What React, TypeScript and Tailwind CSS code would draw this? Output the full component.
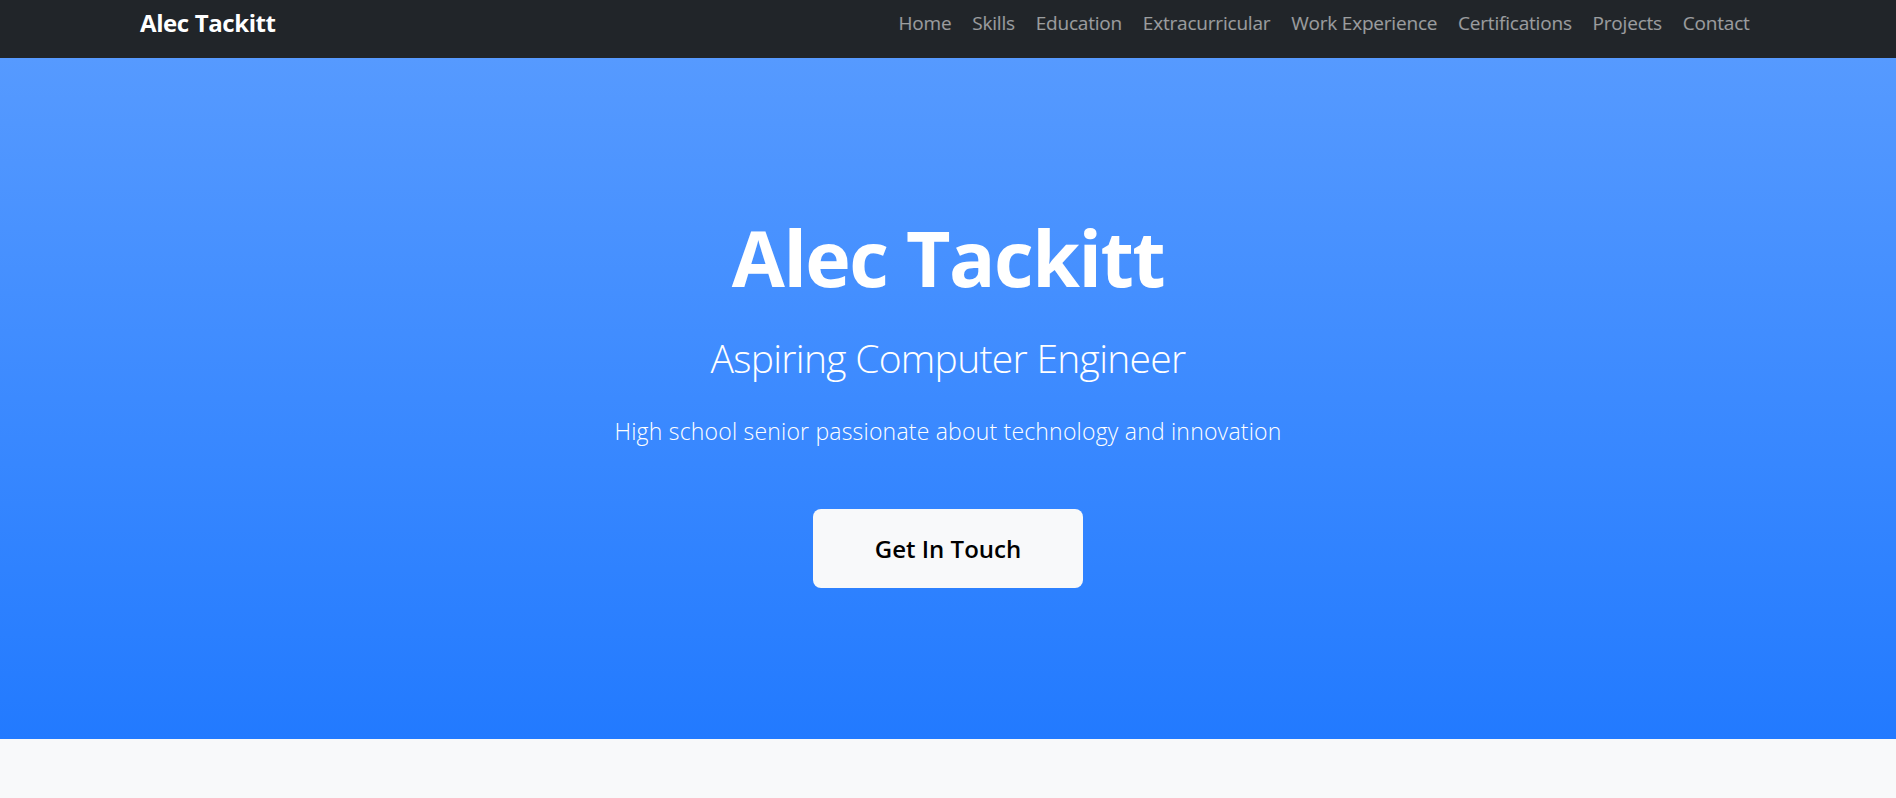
const links = [
  "Home",
  "Skills",
  "Education",
  "Extracurricular",
  "Work Experience",
  "Certifications",
  "Projects",
  "Contact",
];

function Navbar() {
  return (
    <header className="bg-[#212529]">
      <nav className="mx-auto flex w-[1640px] items-center justify-between pt-[5px] pb-[17px] pl-[12px] pr-[8px]">
        <a
          href="#"
          className="text-[24px] leading-[36px] font-bold tracking-[-0.4px] text-white"
        >
          Alec Tackitt
        </a>
        <ul className="flex items-center">
          {links.map((link) => (
            <li key={link}>
              <a
                href={`#${link.toLowerCase()}`}
                className="block px-[10.4px] text-[19px] leading-[30px] tracking-[-0.2px] text-white/55"
              >
                {link}
              </a>
            </li>
          ))}
        </ul>
      </nav>
    </header>
  );
}

function Hero() {
  return (
    <section className="flex h-[681px] flex-col items-center justify-center bg-[linear-gradient(180deg,#569aff,#227aff)] text-center text-white">
      <h1 className="text-[77px] leading-[96px] font-bold tracking-[-1.5px]">
        Alec Tackitt
      </h1>
      <p className="mt-[28px] text-[39px] leading-[48px] font-light tracking-[-0.7px]">
        Aspiring Computer Engineer
      </p>
      <p className="mt-[33px] text-[23px] leading-[33px] font-light tracking-[0.2px]">
        High school senior passionate about technology and innovation
      </p>
      <a
        href="#contact"
        className="mt-[61px] rounded-[8px] bg-[#f8f9fa] px-[62px] py-[21px] text-[24px] leading-[37px] font-semibold text-black"
      >
        Get In Touch
      </a>
    </section>
  );
}

export default function App() {
  return (
    <div className="min-h-screen bg-[#f8f9fa] font-['Open_Sans','Noto_Sans',sans-serif]">
      <Navbar />
      <Hero />
      <section className="h-[200px] bg-[#f8f9fa]" />
    </div>
  );
}
